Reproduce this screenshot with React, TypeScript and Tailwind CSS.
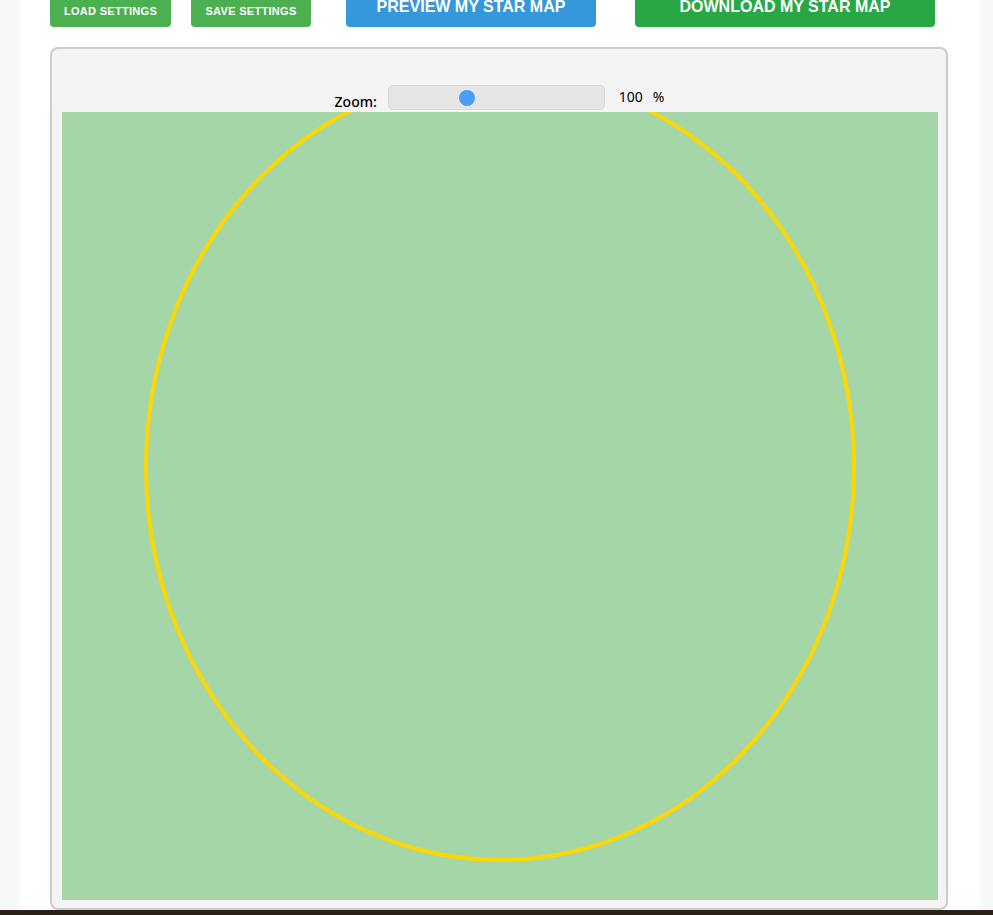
import React from "react";

const ZoomControl: React.FC<{ value: number }> = ({ value }) => {
  // thumb position inside the track (track is 217px wide)
  const thumbLeft = 70;
  return (
    <div className="flex h-[26px] items-center justify-center pr-[9px] font-['Noto_Sans',sans-serif] text-[14px] text-black">
      <span className="self-end font-medium leading-[16px] mr-[11px]">Zoom:</span>
      <div className="relative h-[25px] w-[217px] rounded-[5px] border border-[#d8d8d8] bg-[#e5e5e5]">
        <div
          className="absolute top-[4px] h-[16px] w-[16px] rounded-full bg-[#4a9ff5]"
          style={{ left: thumbLeft }}
        />
      </div>
      <span className="ml-[14px] leading-none">{value}</span>
      <span className="ml-[10px] leading-none">%</span>
    </div>
  );
};

export default function App() {
  return (
    <div className="h-[915px] overflow-hidden bg-[#f7f8fa]">
      <div className="ml-[20px] h-[910px] w-[960px] overflow-hidden bg-white">
        {/* button row, scrolled partly out of view */}
        <div className="-mt-[13px] flex items-end pl-[30px] font-['Liberation_Sans',Arial,sans-serif] font-bold text-white">
          <button className="h-[32px] w-[121px] rounded-[4px] bg-[#4caf50] text-[11px] uppercase tracking-[0.3px]">
            Load Settings
          </button>
          <button className="ml-[20px] h-[32px] w-[120px] rounded-[4px] bg-[#4caf50] text-[11px] uppercase tracking-[0.3px]">
            Save Settings
          </button>
          <button className="ml-[35px] h-[40px] w-[250px] rounded-[4px] bg-[#3498db] text-[16px] uppercase">
            Preview My Star Map
          </button>
          <button className="ml-[39px] h-[40px] w-[300px] rounded-[4px] bg-[#28a745] text-[16px] uppercase">
            Download My Star Map
          </button>
        </div>

        <div className="ml-[30px] mt-[20px] w-[898px] rounded-[8px] border-2 border-[#cccccc] bg-[#f4f4f4] pb-[8px] pl-[10px] pt-[35px]">
          <ZoomControl value={100} />
          <div className="mt-[2px] h-[788px] w-[876px] overflow-hidden bg-[#a5d6a7]">
            <svg width="876" height="788" viewBox="0 0 876 788">
              <ellipse cx="438" cy="355" rx="354" ry="393" fill="none" stroke="#ffd700" strokeWidth="4" />
            </svg>
          </div>
        </div>
      </div>
      <div className="h-[40px] bg-[#2b2118]" />
    </div>
  );
}
